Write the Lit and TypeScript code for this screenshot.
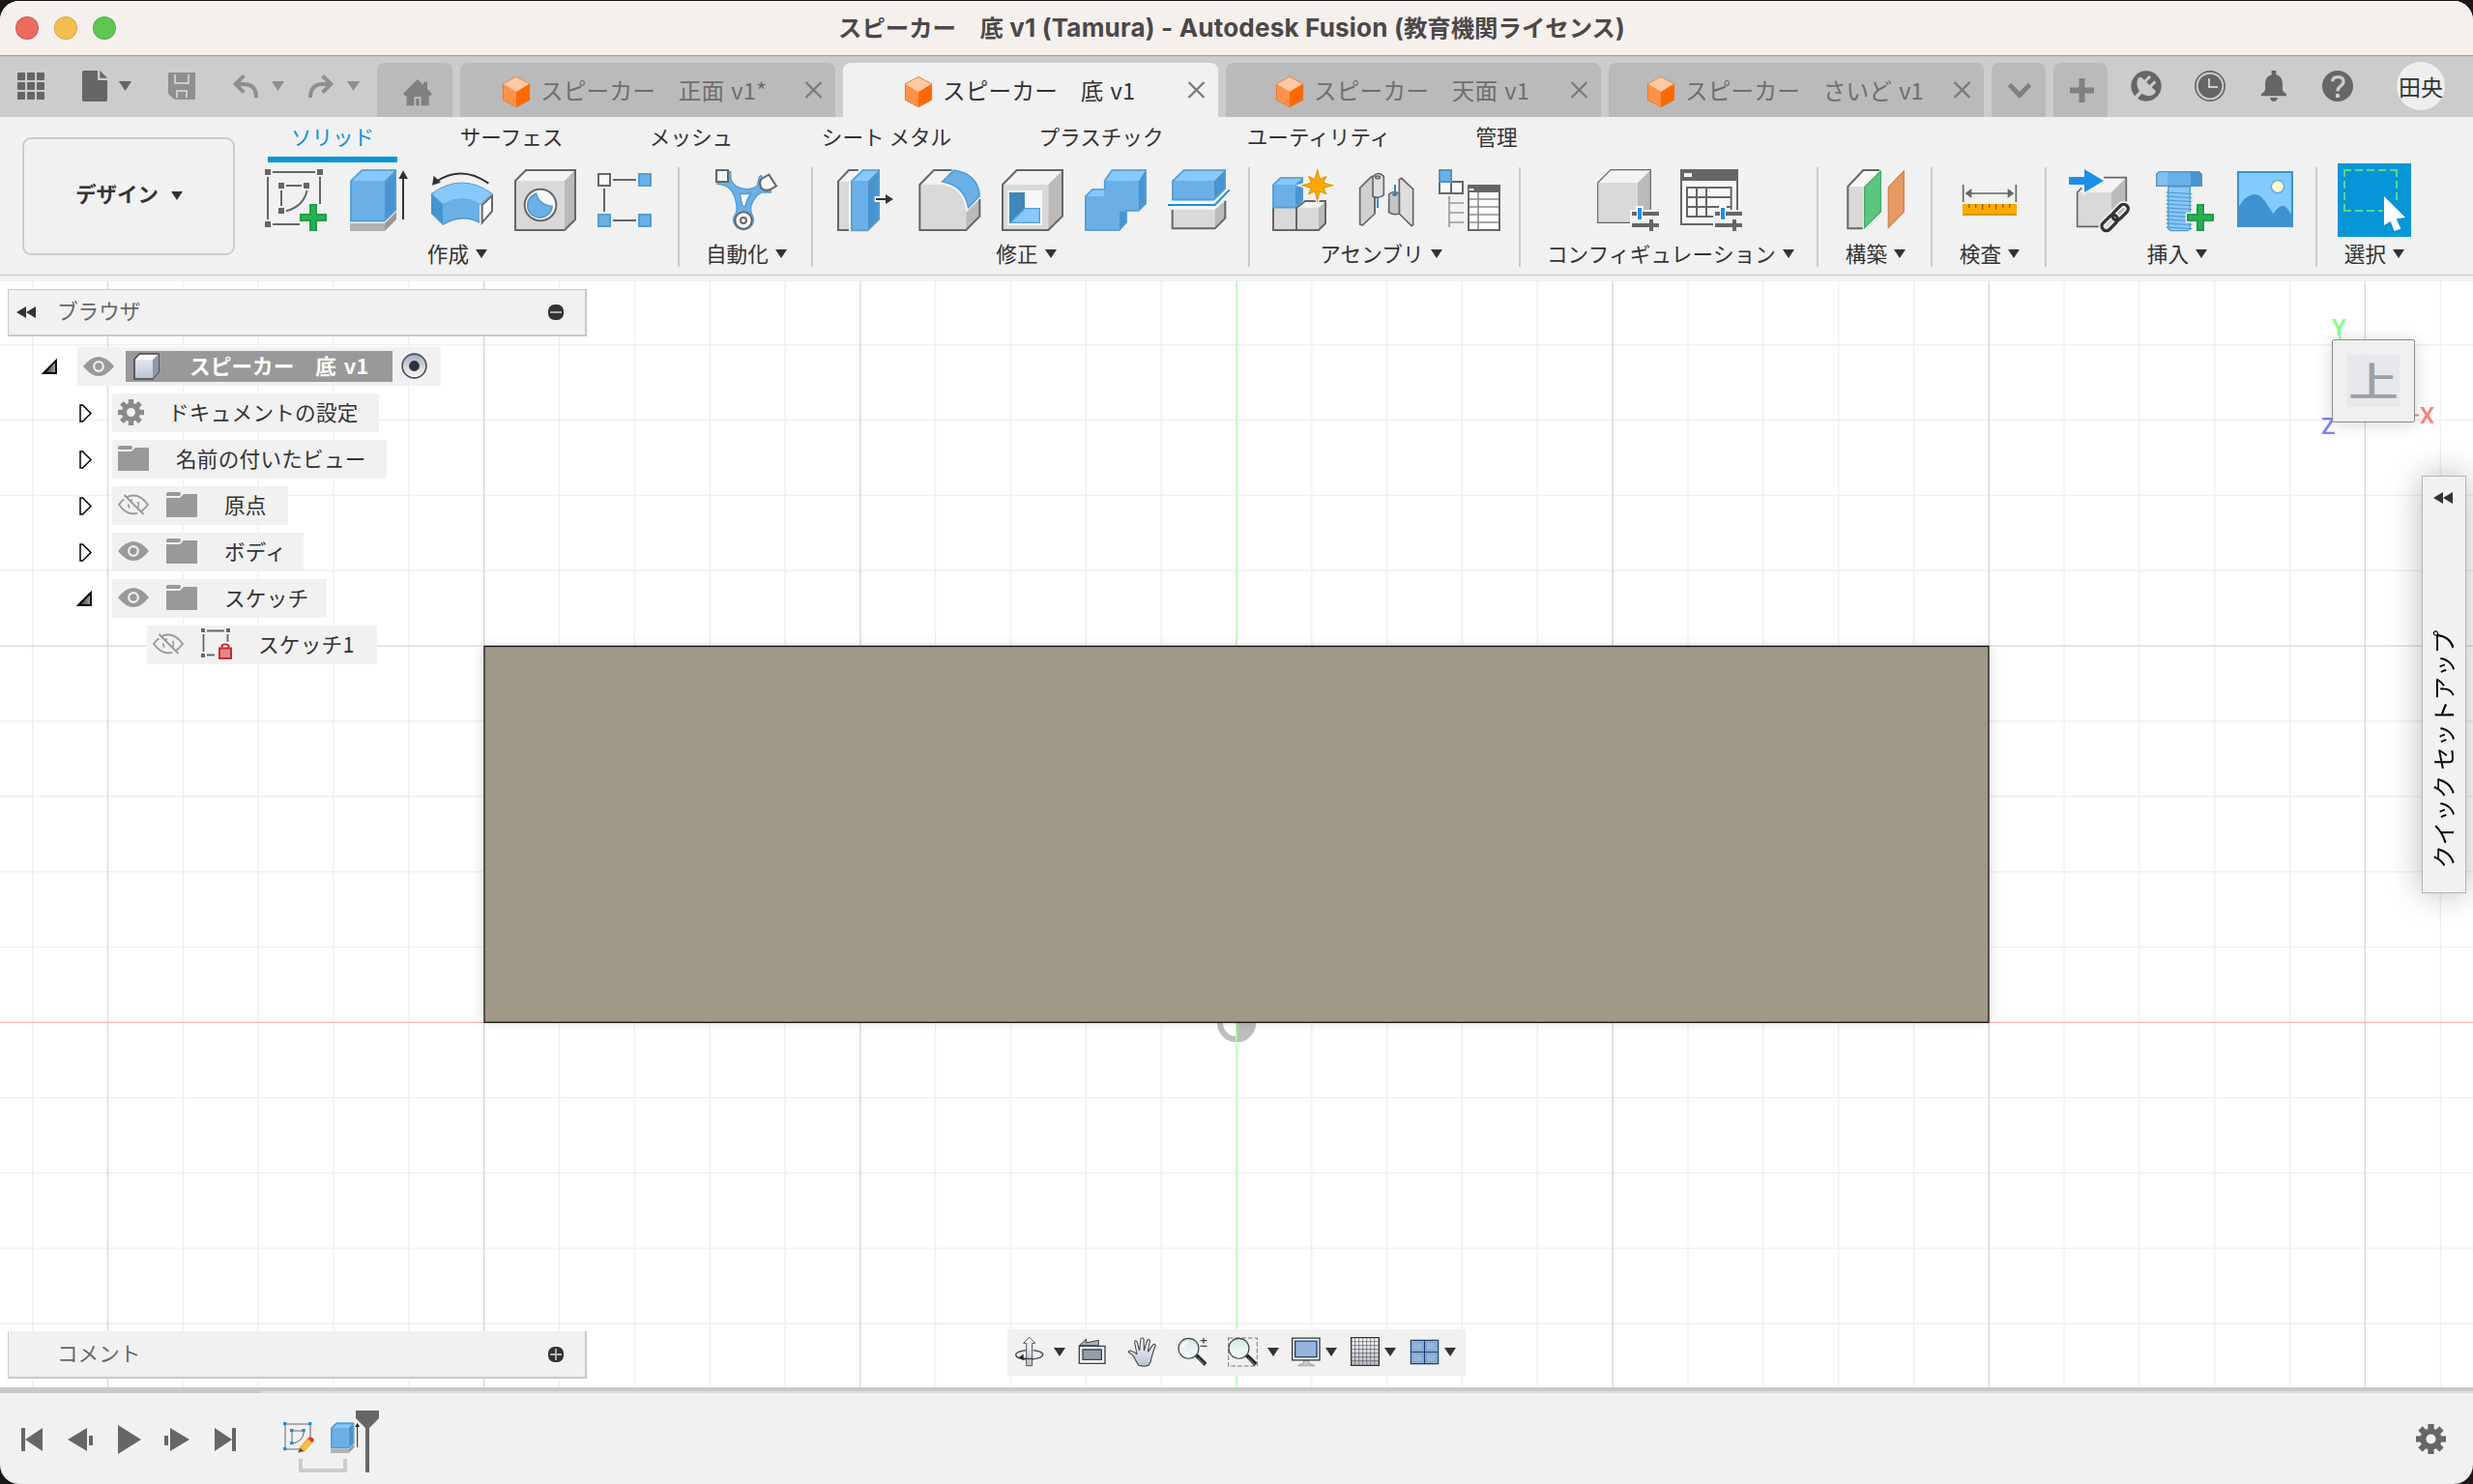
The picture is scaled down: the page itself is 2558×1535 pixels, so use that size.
import { LitElement, html, svg, css, nothing } from "lit";
import { customElement } from "lit/decorators.js";

/* ---------- palette ---------- */
const K = "#666666";
const BF = "#6aafe6", BT = "#87c8fd", BS = "#4794d0", BL = "#559dd1";
const GF = "#d9d9d9", GT = "#f3f3f3", GS = "#bababa";

/* ---------- helpers ---------- */
const icon = (w: number, h: number, vw: number, vh: number, body: unknown) =>
  html`<svg class="ic" width=${w} height=${h} viewBox="0 0 ${vw} ${vh}" fill="none">${body}</svg>`;
const tool = (body: unknown) => icon(64, 64, 192, 192, body);
const tri = (w = 12, h = 9, c = "#333") =>
  icon(w, h, 12, 9, svg`<path d="M0 0H12L6 9Z" fill=${c}/>`);

const plus = svg`<path d="M138 108h24v30h30v24h-30v30h-24v-30h-30v-24h30z" fill="#f1f1f1" stroke="#f1f1f1" stroke-width="8"/>
  <path d="M141 111h18v30h30v18h-30v30h-18v-30h-30v-18h30z" fill="#28b151" stroke="#1e9e48" stroke-width="6"/>`;

const sliders = svg`
  <path d="M102 126h18v-12h24v12h48v60h-12v10h-24v-10h-54z" fill="#f1f1f1"/>
  <path d="M108 138H192M108 174H192" stroke=${K} stroke-width="12"/>
  <path d="M168 156V192" stroke=${K} stroke-width="12"/>
  <path d="M132 117V159" stroke="#fff" stroke-width="18"/>
  <path d="M132 120V156" stroke="#1b8fe6" stroke-width="12"/>`;

const cube = (fx: number, fy: number, fw: number, fh: number, d: number, blue = true) => {
  const [f, t, s] = blue ? [BF, BT, BS] : [GF, GT, GS];
  return svg`<path d="M${fx} ${fy}h${fw}v${fh}h${-fw}z" fill=${f}/>
    <path d="M${fx} ${fy}l${d} ${-d}h${fw}l${-d} ${d}z" fill=${t}/>
    <path d="M${fx + fw} ${fy}l${d} ${-d}v${fh}l${-d} ${d}z" fill=${s}/>
    ${blue ? svg`<path d="M${fx + 3} ${fy + 1}l${d - 1} ${-d + 2}h${fw - 5}v${fh - 2}l${-d + 1} ${d - 2}h${-fw + 5}z" stroke=${BL} stroke-width="5"/>` : nothing}`;
};

const starPts = (cx: number, cy: number, R: number, r: number) =>
  Array.from({ length: 16 }, (_, i) => {
    const a = (i * Math.PI) / 8, q = i % 2 ? r : i % 4 ? R * 0.8 : R;
    return `${(cx + q * Math.sin(a)).toFixed(1)},${(cy - q * Math.cos(a)).toFixed(1)}`;
  }).join(" ");

/* ---------- ribbon icons ---------- */
const icSketch = tool(svg`
  <path d="M0 0h18v18h-18zM162 0h18v18h-18zM0 162h18v18h-18zM42 42h18v18h-18zM120 42h18v18h-18zM42 120h18v18h-18z" fill=${K}/>
  <path d="M24 9H156M9 24V156M171 24V108M24 171H108M66 51H114M51 66V114M131 66Q119 116 66 130" stroke=${K} stroke-width="6"/>${plus}`);
const icExtrude = tool(svg`
  ${cube(6, 36, 108, 126, 36)}
  <path d="M6 168H114V192H6Z" fill="#b2b2b2"/><path d="M114 168L150 132V156L114 192Z" fill="#999"/>
  <path d="M171 24V156" stroke="#333" stroke-width="6"/><path d="M171 4L157 30H186Z" fill="#333"/>`);
const icRevolve = tool(svg`
  <path d="M178 44Q96 -14 16 38" stroke="#333" stroke-width="6"/><path d="M3 50L8 20L30 41Z" fill="#333"/>
  <path d="M0 77L36 110V173L0 138Z" fill=${BS}/>
  <path d="M0 77Q94 8 188 75L152 110Q94 74 36 110Z" fill=${BT} stroke=${BL} stroke-width="3"/>
  <path d="M36 110Q94 74 150 110V167Q94 138 36 173Z" fill=${BF}/>
  <path d="M36 172Q94 136 150 165" stroke=${BL} stroke-width="5"/>
  <path d="M0 77L36 110" stroke=${BL} stroke-width="4"/>
  <path d="M158 111L189 82V130L158 166Z" fill="#fff" stroke=${K} stroke-width="6"/>`);
const icHole = tool(svg`
  ${cube(3, 36, 153, 153, 33, false)}
  <path d="M3 36L36 3H189V156L156 189H3Z" stroke=${K} stroke-width="6"/>
  <circle cx="81" cy="111" r="49" fill="#f8f8f8" stroke=${K} stroke-width="6"/>
  <path d="M68 76A38 38 0 1 0 117 115A50 50 0 0 1 68 76Z" fill=${BF} stroke=${BL} stroke-width="5"/>`);
const icPattern = tool(svg`
  <path d="M3 15h36v36h-36z" fill="#f8f8f8" stroke=${K} stroke-width="6"/>
  <path d="M129 15h36v36h-36zM3 141h36v36h-36zM129 141h36v36h-36z" fill=${BF} stroke=${BL} stroke-width="6"/>
  <path d="M48 33H120M21 60V132M48 159H120" stroke=${K} stroke-width="6"/>`);
const icAutomate = tool(svg`
  <path d="M40 8L47 8L48 32Q62 61 96 62Q120 62 130 50L136 24L142 20L172 64L172 72L144 72Q120 84 110 116Q108 134 116 146A31 31 0 1 1 58 146Q68 134 66 116Q62 78 46 62Q30 47 6 46V38H40Z" fill=${BF} stroke=${BL} stroke-width="4"/>
  <path d="M76 75Q92 78 110 75Q98 92 92 115Q86 118 83 112Z" fill="#f8f8f8" stroke=${BL} stroke-width="4"/>
  <path d="M3 3h36v36h-36z" fill="#f8f8f8" stroke=${K} stroke-width="6"/>
  <path d="M166 17L189 52L170 63Q150 70 141 56Q133 36 148 27Z" fill="#f8f8f8" stroke=${K} stroke-width="6"/>
  <circle cx="87" cy="159" r="26" fill="#f8f8f8" stroke=${K} stroke-width="6"/>
  <circle cx="87" cy="159" r="9" stroke=${K} stroke-width="6"/>`);
const icPress = tool(svg`<g transform="translate(6 0)">
  <path d="M2 38H36V189H2Z" fill=${GF}/><path d="M2 38L36 3H70L36 38Z" fill=${GT}/>
  <path d="M66 3H36L3 38V189H36" stroke=${K} stroke-width="6"/>
  <path d="M36 34L72 -2V10L40 42V192H36Z" fill="#f8f8f8"/>
  ${cube(42, 36, 54, 155, 36)}
  <path d="M116 84H148V102H116Z" fill="#f8f8f8"/>
  <path d="M120 93H152" stroke="#333" stroke-width="6"/><path d="M150 78L174 93L150 108Z" fill="#333"/></g>`);
const icFillet = tool(svg`
  <path d="M4 48L48 3H108L72 44Z" fill=${GT}/>
  <path d="M4 48H66Q140 54 148 134V189H4Z" fill=${GF}/>
  <path d="M148 134L190 92V146L148 189Z" fill=${GS}/>
  <path d="M104 3H48L4 48V189H148L190 146V92" stroke=${K} stroke-width="6"/>
  <path d="M68 43L108 -2Q190 8 195 86L152 128Q144 52 68 43Z" fill="#f8f8f8"/>
  <path d="M74 39L110 3Q184 14 190 82L155 119Q142 50 74 39Z" fill=${BF} stroke=${BL} stroke-width="5"/>`);
const icShell = tool(svg`
  ${cube(3, 48, 142, 141, 44, false)}
  <path d="M3 48L47 3H189V146L145 189H3Z" stroke=${K} stroke-width="6"/>
  <path d="M18 66H126V174H18Z" fill="#f8f8f8"/>
  <path d="M24 72H72V122L24 168Z" fill="#4088bc"/>
  <path d="M72 122H118V166H27Z" fill=${BT} stroke=${BL} stroke-width="4"/>`);
const icCombine = tool(svg`
  <path d="M0 84H60V36H168V130H108V191H0Z" fill=${BF}/>
  <path d="M0 84L24 60H60V84ZM60 36L84 0H191L168 36Z" fill=${BT}/>
  <path d="M168 36L191 0V108L168 130ZM108 130H131V166L108 191Z" fill=${BS}/>
  <path d="M3 84L24 63H62V36L85 3H189V107L167 129H129V165L107 189H3Z" stroke=${BL} stroke-width="5"/>`);
const icSplit = tool(svg`
  ${cube(12, 36, 132, 60, 36)}
  <path d="M0 111H146L190 66" stroke="#f8f8f8" stroke-width="18"/>
  <path d="M0 111H146L191 64" stroke="#1b8fe6" stroke-width="6"/>
  <path d="M14 126H146V184H14Z" fill=${GF}/><path d="M146 126L178 98V152L146 184Z" fill=${GS}/>
  <path d="M14 126V184H146L178 152V98" stroke=${K} stroke-width="6"/>`);
const icNewComp = tool(svg`
  <path d="M3 120H75V189H3ZM78 120H144V189H78Z" fill=${GF}/>
  <path d="M78 120L99 99H165L144 120Z" fill=${GT}/><path d="M144 120L165 99V168L144 189Z" fill=${GS}/>
  <path d="M3 120V189H144L165 168V99H102L75 120V189" stroke=${K} stroke-width="6"/>
  ${cube(0, 48, 72, 72, 24)}
  <polygon points=${starPts(140, 50, 54, 24)} fill="#f8f8f8" stroke="#f8f8f8" stroke-width="8"/>
  <polygon points=${starPts(140, 50, 47, 20)} fill="#ffa900" stroke="#e79a05" stroke-width="4"/>`);
const icJoint = tool(svg`
  <path d="M14 58L50 23L60 22V138L22 174L14 171Z" fill="#d0d0d0" stroke=${K} stroke-width="5"/>
  <path d="M54 24V84Q70 94 88 80V22Q70 4 54 24Z" fill="#dedede" stroke=${K} stroke-width="5"/>
  <path d="M60 84V134" stroke=${K} stroke-width="5"/>
  <ellipse cx="69" cy="25" rx="7" ry="4" stroke=${K} stroke-width="5"/>
  <path d="M69 90V120" stroke="#1b8fe6" stroke-width="6"/>
  <path d="M136 32L143 28L179 62V172L174 176L136 138Z" fill="#dedede" stroke=${K} stroke-width="5"/>
  <path d="M104 78V134Q118 144 136 138V76Q118 64 104 78Z" fill="#c4c4c4" stroke=${K} stroke-width="5"/>
  <ellipse cx="122" cy="79" rx="8" ry="4" fill=${K}/><path d="M123 48V78" stroke="#1b8fe6" stroke-width="6"/>`);
const icBom = tool(svg`
  <path d="M3 39H75V75H3ZM39 39V75" fill="#f8f8f8" stroke=${K} stroke-width="6"/>
  <path d="M3 3h36v36h-36z" fill=${BF} stroke="#4f94c8" stroke-width="6"/>
  <path d="M33 84V180M33 105H78M33 135H78M33 165H78" stroke="#999" stroke-width="5"/>
  <path d="M93 51H189V189H93Z" fill="#fff" stroke=${K} stroke-width="6"/>
  <path d="M90 48H192V72H90Z" fill=${K}/><path d="M95 60h14v6h-14z" fill="#fff"/>
  <path d="M96 93H186M96 117H186M96 141H186M96 165H186M123 72V186" stroke="#8c8c8c" stroke-width="5"/>`);
const icConfig = tool(svg`
  ${cube(2, 42, 124, 124, 40, false)}
  <path d="M2 42L42 2H166V126L126 166H2Z" stroke=${K} stroke-width="3.5"/>${sliders}`);
const icConfigTable = tool(svg`
  <path d="M3 36H177V171H3Z" fill="#f8f8f8"/><path d="M0 0H180V36H0Z" fill=${K}/><path d="M12 12h24v12h-24z" fill="#f8f8f8"/>
  <path d="M3 36V171H102M177 36V126M21 57H158V147H21ZM21 87H158M21 117H158M51 57V147M81 57V147" stroke=${K} stroke-width="6"/>${sliders}`);
const icConstruct = tool(svg`
  <path d="M10 54H58V185H10Z" fill=${GF}/><path d="M10 54L58 3H110L58 54Z" fill="#f8f8f8"/>
  <path d="M108 3H58L10 54V184H56" stroke=${K} stroke-width="6"/>
  <path d="M62 56L112 6V132L62 181Z" fill="#5cc67f" stroke="#3fae68" stroke-width="4"/>
  <path d="M136 56L184 6V132L136 181Z" fill="#e89a63" stroke="#cf8752" stroke-width="4"/>`);
const icInspect = tool(svg`
  <path d="M14 48V102M178 48V102M26 75H166" stroke=${K} stroke-width="5"/>
  <path d="M20 75L40 60V90ZM172 75L152 60V90Z" fill=${K}/>
  <path d="M12 108H180V144H12Z" fill="#ffa900"/><path d="M12 141H180" stroke="#e09400" stroke-width="6"/>
  <path d="M32 108V120M53 108V120M74 108V126M95 108V120M116 108V126M137 108V120M158 108V120" stroke="#8a6414" stroke-width="4"/>`);
const icInsert = tool(svg`
  ${cube(26, 72, 106, 108, 46, false)}
  <path d="M40 58L26 72V178H94M108 26H178V108" stroke=${K} stroke-width="5"/>
  <path d="M-3 18H42V-10L116 36L42 82V54H-3Z" fill="#f3f3f3"/>
  <path d="M0 24H48V0L108 36L48 72V48H0Z" fill="#1b8fe6"/>
  <g transform="translate(143 150) rotate(-45)">
    <g stroke="#f1f1f1" stroke-width="20"><rect x="-52" y="-14" width="58" height="28" rx="14"/><rect x="-6" y="-14" width="58" height="28" rx="14"/></g>
    <g stroke="#333" stroke-width="10"><rect x="-52" y="-14" width="58" height="28" rx="14"/><rect x="-6" y="-14" width="58" height="28" rx="14"/></g>
  </g>`);
const icBolt = tool(svg`
  <path d="M50 54H118V186L110 191H58L50 186Z" fill=${BT} stroke=${BL} stroke-width="4"/>
  <path d="M44 72L124 77M44 84L124 89M44 96L124 101M44 108L124 113M44 120L124 125M44 132L124 137M44 144L124 149M44 156L124 161M44 168L124 173M44 180L124 185" stroke="#5b9fd4" stroke-width="4"/>
  <path d="M14 16L22 8H146L154 16V52H14Z" fill=${BF}/><path d="M14 16L22 8H48V52H14Z" fill="#83bfee"/><path d="M120 8H146L154 16V52H120Z" fill=${BS}/>
  <path d="M14 16L22 8H146L154 16V52H14Z" stroke="#5590b8" stroke-width="4"/>${plus}`);
const icPicture = tool(svg`
  <path d="M9 9H177V177H9Z" fill="#82cbff"/>
  <circle cx="132" cy="54" r="20" fill="#ffffcc" stroke="#66b0e4" stroke-width="5"/>
  <path d="M9 120Q34 78 60 78Q84 78 104 118L118 138L130 124Q146 104 160 120L177 144V177H9Z" fill="#3d92cf"/>
  <path d="M9 9H177V177H9Z" stroke="#3d92cf" stroke-width="6"/>`);
const icSelect = icon(76, 76, 228, 228, svg`
  <rect width="228" height="228" fill="#0696d7"/>
  <path d="M21 42V21H42M54 21H78M90 21H114M126 21H150M162 21H183V42M183 54V78M183 90V114M21 54V78M21 90V114M21 126V147H42M54 147H78M90 147H114M126 147H140" stroke="#5fd684" stroke-width="6"/>
  <path d="M144 102L210 168L182 172L196 203L176 210L164 180L144 192Z" fill="#fff"/>`);

/* ---------- header icons ---------- */
const icApps = icon(28, 28, 84, 84, svg`<g fill=${K}>${[0, 30, 60].map((y) => [0, 30, 60].map((x) => svg`<rect x=${x} y=${y} width="24" height="24" rx="2"/>`))}</g>`);
const icFile = icon(26, 32, 78, 96, svg`<path d="M5 0H48V30H78V91Q78 96 73 96H5Q0 96 0 91V5Q0 0 5 0Z" fill=${K}/><path d="M55 0L78 23H55Z" fill=${K}/>`);
const icSave = icon(28, 28, 84, 84, svg`<path d="M4 0H80Q84 0 84 4V80Q84 84 80 84H20L0 66V4Q0 0 4 0Z" fill="#8f8f8f"/><path d="M21 6V33H63V6M27 78V57H57V78" stroke="#ccc" stroke-width="6"/>`);
const icUndo = icon(26, 24, 78, 72, svg`<path d="M34 4L8 30L34 56M8 30H36Q72 32 72 72" stroke="#8f8f8f" stroke-width="12"/>`);
const icRedo = icon(26, 24, 78, 72, svg`<path d="M44 4L70 30L44 56M70 30H42Q6 32 6 72" stroke="#8f8f8f" stroke-width="12"/>`);
const icHome = icon(30, 28, 90, 84, svg`<path d="M0 44L45 0L63 18V8H75V30L90 46L84 52H80V82H56V54H34V82H11V52H6Z" fill="#808080"/><path d="M40 60H50V82H40Z" fill="#808080"/>`);
const icCube = icon(28, 32, 28, 32, svg`
  <path d="M14 0L28 7.5L14 16L0 7.5Z" fill="#ffc9a3"/><path d="M0 7.5L14 16V32L0 24.5Z" fill="#ff9248"/><path d="M28 7.5L14 16V32L28 24.5Z" fill="#ff6a00"/>
  <path d="M14 .4L27.6 7.7V24.3L14 31.6L.4 24.3V7.7Z" stroke="#d9772f" stroke-width=".8"/>`);
const icClose = icon(19, 18, 19, 18, svg`<path d="M1.5 1L17.5 17M17.5 1L1.5 17" stroke="#7b7b7b" stroke-width="2.4"/>`);
const icChevron = icon(24, 17, 24, 17, svg`<path d="M1.5 2.5L12 13.5L22.5 2.5" stroke="#808080" stroke-width="5"/>`);
const icAdd = icon(25, 25, 25, 25, svg`<path d="M12.5 0V25M0 12.5H25" stroke="#808080" stroke-width="6"/>`);
const icPlug = icon(32, 32, 96, 96, svg`
  <circle cx="48" cy="48" r="47" fill=${K}/>
  <path d="M20 30Q26 16 34 22L76 62Q80 68 68 76Q48 84 32 70Q16 54 20 30Z" fill="#ccc"/>
  <path d="M42 36L60 18M58 52L76 34" stroke="#ccc" stroke-width="9"/>
  <path d="M32 66L8 92" stroke="#ccc" stroke-width="11"/>`);
const icClock = icon(32, 32, 96, 96, svg`<circle cx="48" cy="48" r="45.5" stroke=${K} stroke-width="5"/><circle cx="48" cy="48" r="37" fill=${K}/><path d="M45 24V51H72" stroke="#ccc" stroke-width="6"/>`);
const icBell = icon(26, 32, 78, 96, svg`<path d="M32 0H46V13Q66 19 66 42V60Q68 68 78 73V79H0V73Q10 68 12 60V42Q12 19 32 13ZM27 84H51Q48 96 39 96Q30 96 27 84Z" fill=${K}/>`);
const icHelp = icon(32, 32, 96, 96, svg`<circle cx="48" cy="48" r="48" fill=${K}/><path d="M32 34Q32 20 48 20Q66 20 66 34Q66 42 56 49Q48 54 48 64" stroke="#ccc" stroke-width="10"/><path d="M42 72h12v12h-12z" fill="#ccc"/>`);

/* ---------- browser tree icons ---------- */
const G = "#999999";
const icEye = icon(32, 20, 32, 20, svg`<path d="M0 10Q8 0 16 0T32 10Q24 20 16 20T0 10Z" fill=${G}/><circle cx="16" cy="10" r="4.8" stroke="#f1f1f1" stroke-width="2.2"/>`);
const icEyeOff = icon(32, 22, 32, 22, svg`<g stroke=${G} stroke-width="1.8"><path d="M1 11Q8 1.5 16 1.5T31 11Q24 20.5 16 20.5T1 11Z"/><path d="M12 14.5A5.3 5.3 0 0 1 15 6M20.5 8A5.3 5.3 0 0 1 17 16.3M15 11.5A2 2 0 0 0 17 12.5"/></g><path d="M4.5 1.5L25 22.5" stroke="#f1f1f1" stroke-width="3"/><path d="M6.5 1L26.5 21" stroke=${G} stroke-width="2"/>`);
const icFolder = icon(32, 26, 32, 26, svg`<path d="M0 2Q0 0 2 0H13Q15 0 15 2L14 4H0Z" fill=${G}/><path d="M0 6H14L18 2H32V26H0Z" fill=${G}/>`);
const gear = (s: number, c: string, hole: string) => icon(s, s, 28, 28, svg`
  <g fill=${c}>${[0, 45, 90, 135].map((a) => svg`<rect x="11.2" y="0" width="5.6" height="28" transform="rotate(${a} 14 14)"/>`)}<circle cx="14" cy="14" r="10"/></g><circle cx="14" cy="14" r="4.6" fill=${hole}/>`);
const icBox = icon(28, 28, 28, 28, svg`
  <defs><linearGradient id="bx" x1="0" y1="0" x2="0" y2="1"><stop offset="0" stop-color="#eceff5"/><stop offset="1" stop-color="#bcc4d2"/></linearGradient></defs>
  <path d="M1 7L6 1H26V20L20 27H1Z" fill="url(#bx)" stroke="#444" stroke-width="1.6"/><path d="M20 7L26 1V20L20 27Z" fill="#8f97a6"/><path d="M2 7L6.5 2H25L20 7Z" fill="#fff"/>`);
const icRadio = icon(27, 27, 27, 27, svg`
  <defs><linearGradient id="rd" x1="0" y1="0" x2="0" y2="1"><stop offset="0" stop-color="#9fadc4"/><stop offset="1" stop-color="#fafbfd"/></linearGradient></defs>
  <circle cx="13.5" cy="13.5" r="12.4" fill="url(#rd)" stroke="#4d4d4d" stroke-width="1.6"/><circle cx="13.5" cy="13.5" r="5.4" fill="#333"/>`);
const icLockSketch = icon(32, 32, 32, 32, svg`
  <path d="M0 0h4v4h-4zM26 0h4v4h-4zM0 26h4v4h-4z" fill=${K}/><path d="M6 2.5H24M2.5 6V24M27.5 6V14M6 27.5H14" stroke=${K} stroke-width="1.8"/>
  <path d="M21.5 20V18.5Q21.5 16.5 25 16.5T28.5 18.5V20" stroke="#cf2a2a" stroke-width="2"/><path d="M19 20.5h12v10.5h-12z" fill="#e08a8a" stroke="#cf2a2a" stroke-width="2"/>`);
const icOpen = icon(15, 15, 15, 15, svg`<defs><linearGradient id="op"><stop offset="0" stop-color="#222"/><stop offset="1" stop-color="#aaa"/></linearGradient></defs><path d="M1 14L14 1V14Z" fill="url(#op)" stroke="#000" stroke-width="1.8"/>`);
const icClosed = icon(13, 19, 13, 19, svg`<path d="M1 1H3.5L12 9.5L3.5 18H1Z" fill="#fff" stroke="#000" stroke-width="1.5"/>`);
const icRewind = icon(20, 12, 20, 12, svg`<path d="M10 0V12L0 6ZM20 0V12L10 6Z" fill="#333"/>`);
const round = (v: boolean) => icon(16, 16, 16, 16, svg`<rect width="16" height="16" rx="6.5" fill="#333"/><path d=${v ? "M2 8H14M8 2V14" : "M2 8H14"} stroke="#b8b8b8" stroke-width="1.8"/>`);

/* ---------- navigation bar icons ---------- */
const N = "#3c4450";
const grads = svg`<defs>
  <linearGradient id="gl" x1="0" y1="0" x2="0" y2="1"><stop offset="0" stop-color="#d3e6e4"/><stop offset="1" stop-color="#fbfefe"/></linearGradient>
  <linearGradient id="mt" x1="0" y1="0" x2="0" y2="1"><stop offset="0" stop-color="#fff"/><stop offset="1" stop-color="#b9bfd2"/></linearGradient></defs>`;
const nOrbit = icon(30, 32, 90, 96, svg`${grads}
  <path d="M36 44Q2 48 2 58Q4 72 44 72Q86 70 86 56Q84 48 56 44" stroke=${N} stroke-width="4"/>
  <path d="M35 92V22H26L44 3L62 22H53V92Z" fill="url(#mt)" stroke="#555" stroke-width="3"/>
  <path d="M14 66Q30 72 54 70" stroke=${N} stroke-width="4"/><path d="M12 66L26 56V76Z" fill="#222"/>`);
const nLook = icon(30, 30, 90, 90, svg`${grads}
  <path d="M4 26L26 6L24 18L64 10V26Z" fill="#a9b2bb" stroke=${N} stroke-width="3"/>
  <path d="M4 28H84V82H4Z" fill="#f0f2f4" stroke=${N} stroke-width="4"/><path d="M15 39H73V70H15Z" fill="#93a0ab" stroke=${N} stroke-width="4"/>`);
const nPan = icon(30, 31, 90, 93, svg`${grads}
  <path d="M36 88Q26 74 20 60Q14 52 5 48Q2 42 10 42Q22 44 30 54L23 16Q24 8 30 14L38 42L42 6Q48 -2 51 6L52 42L62 10Q68 4 70 12L64 46L80 24Q88 18 87 27Q80 46 76 62Q74 78 66 88Q52 93 36 88Z" fill="url(#mt)" stroke=${N} stroke-width="3.2"/>`);
const nZoom = icon(31, 31, 92, 92, svg`${grads}
  <path d="M58 56L86 84" stroke="#222a33" stroke-width="12"/><path d="M62 64L82 83" stroke="#6b7683" stroke-width="3"/>
  <circle cx="34" cy="35" r="31" fill="url(#gl)" stroke=${N} stroke-width="3.5"/><path d="M16 32Q18 18 32 14" stroke="#fff" stroke-width="6"/>
  <path d="M80 2V20M70 11H90M70 28H90" stroke=${N} stroke-width="3.5"/>`);
const nFit = icon(31, 31, 92, 92, svg`${grads}
  <path d="M2 3H90V89H2Z" stroke="#777" stroke-width="3" stroke-dasharray="14 6"/>
  <path d="M58 56L86 84" stroke="#222" stroke-width="12"/><path d="M62 64L82 83" stroke="#777" stroke-width="3"/>
  <circle cx="34" cy="35" r="31" fill="url(#gl)" stroke="#444" stroke-width="3.5"/>`);
const nMonitor = icon(30, 31, 91, 93, svg`${grads}
  <path d="M38 72H54V82Q68 84 72 90H20Q24 84 38 82Z" fill="#c5cad8" stroke="#888" stroke-width="2"/>
  <path d="M2 3H88V72H2Z" fill="#f4f5f8" stroke="#333" stroke-width="4"/><path d="M11 12H79V62H11Z" fill="#96b5dc" stroke="#1f3a66" stroke-width="4"/>`);
const nGrid = icon(30, 30, 90, 90, svg`${grads}
  <path d="M2 2H88V88H2Z" fill="url(#mt)" stroke="#333" stroke-width="4"/>
  <path d=${[14, 26, 38, 50, 62, 74].map((v) => `M${v} 2V88M2 ${v}H88`).join("")} stroke="#555" stroke-width="2"/>`);
const nLayout = icon(31, 27, 92, 80, svg`
  <path d="M4 4H88V76H4Z" fill="#96b5dc" stroke="#1f3a66" stroke-width="3.5"/><path d="M46 4V76M4 40H88" stroke="#1f3a66" stroke-width="3.5"/>
  <path d="M10 10H40V34H10ZM52 10H82V34H52ZM10 46H40V70H10ZM52 46H82V70H52Z" stroke="#7d9dcb" stroke-width="3"/>`);

/* ---------- timeline icons ---------- */
const tPlay = (w: number, h: number, d: string) => icon(w, h, w, h, svg`<path d=${d} fill=${K}/>`);
const tSketch = icon(32, 32, 96, 96, svg`
  <path d="M8 6H84M6 8V84M84 8V60M8 84H56M30 27H62M27 30V62M64 30Q62 60 30 66" stroke=${K} stroke-width="3"/>
  <path d="M0 0h10v10h-10zM78 0h10v10h-10zM0 78h10v10h-10zM21 21h10v10h-10zM58 21h10v10h-10zM21 60h10v10h-10z" fill="#1b8fe6"/>
  <path d="M52 78L76 50L90 62L66 90L48 94Z" fill="#f9bb3e" stroke="#d0922a" stroke-width="2"/><path d="M46 94L52 80L64 90Z" fill="#555"/><path d="M76 50Q88 42 94 52Q98 58 90 64Z" fill="#ee3030"/>`);
const tExtrude = icon(32, 32, 96, 96, svg`
  ${cube(0, 18, 56, 63, 17)}<path d="M0 84H56V96H0Z" fill="#b2b2b2"/><path d="M56 84L73 67V79L56 96Z" fill="#999"/>
  <path d="M83 14V78" stroke="#222" stroke-width="3"/><path d="M83 2L76 15H90Z" fill="#222"/>`);

/* ---------- data ---------- */
const docTabs = [
  { t: "スピーカー　正面 v1*", pad: 44 },
  { t: "スピーカー　底 v1", pad: 64, active: true },
  { t: "スピーカー　天面 v1", pad: 52 },
  { t: "スピーカー　さいど v1", pad: 40 },
];
const ribbonTabs: [string, number][] = [
  ["ソリッド", 134], ["サーフェス", 236], ["メッシュ", 136], ["シート メタル", 268],
  ["プラスチック", 176], ["ユーティリティ", 274], ["管理", 94],
];
const groups = [
  { t: "作成", w: 449, p: 1, s: -10, i: [icSketch, icExtrude, icRevolve, icHole, icPattern] },
  { t: "自動化", w: 138, p: 2, s: 0, i: [icAutomate] },
  { t: "修正", w: 452, p: 4, s: -13, i: [icPress, icFillet, icShell, icCombine, icSplit] },
  { t: "アセンブリ", w: 280, p: 4, s: -11, i: [icNewComp, icJoint, icBom] },
  { t: "コンフィギュレーション", w: 308, p: 2, s: 2, i: [icConfig, icConfigTable] },
  { t: "構築", w: 118, p: 2, s: 0, i: [icConstruct] },
  { t: "検査", w: 118, p: 2, s: 0, i: [icInspect] },
  { t: "挿入", w: 280, p: 4, s: -12, i: [icInsert, icBolt, icPicture] },
  { t: "選択", w: 118, p: 0, s: 0, i: [icSelect] },
];
const tree = [
  { x: 116, w: 276, a: icClosed, i: [gear(27, "#8a8a8a", "#f1f1f1")], t: "ドキュメントの設定", m: 7 },
  { x: 116, w: 284, a: icClosed, i: [icFolder], t: "名前の付いたビュー", m: 10 },
  { x: 116, w: 182, a: icClosed, i: [icEyeOff, icFolder], t: "原点", m: 10 },
  { x: 116, w: 198, a: icClosed, i: [icEye, icFolder], t: "ボディ", m: 10 },
  { x: 116, w: 222, a: icOpen, i: [icEye, icFolder], t: "スケッチ", m: 10 },
  { x: 152, w: 238, a: nothing, i: [icEyeOff, icLockSketch], t: "スケッチ1", m: 9 },
];
const nav: [unknown, number][] = [
  [nOrbit, 8], [tri(), 10], [nLook, 13], [nPan, 21], [nZoom, 22], [nFit, 21], [tri(), 10],
  [nMonitor, 13], [tri(), 5], [nGrid, 14], [tri(), 5], [nLayout, 14], [tri(), 5],
];

@customElement("app-root")
export class AppRoot extends LitElement {
  static styles = css`
    :host { display: block; width: 2558px; height: 1535px; background: #1b1617; overflow: hidden;
      font-family: "Noto Sans CJK JP", "Noto Sans", sans-serif; color: #333; font-size: 21.6px; }
    * { box-sizing: border-box; }
    svg { display: block; flex: none; overflow: visible; }
    .window { display: flex; flex-direction: column; width: 2558px; height: 1534px;
      transform: translateY(1px); border-radius: 20px; overflow: hidden; background: #f1f1f1; white-space: nowrap; }
    .title { height: 57px; flex: none; display: grid; grid-template-columns: 1fr; align-items: center; background: #f6f0ed;
      border-bottom: 1px solid #a3a09f; border-top: 1px solid #fdf8f5; }
    .title > * { grid-area: 1 / 1; }
    .lights { display: flex; gap: 16px; padding-left: 16px; margin-top: -1px; }
    .light { width: 24px; height: 24px; border-radius: 50%; border: 1px solid rgba(0,0,0,.12); }
    .r { background: #ec6a5e; } .y { background: #f5bf4f; } .g { background: #61c554; }
    .caption { justify-self: center; padding-right: 10px; margin-top: -2px; font: 700 24.4px/30px "Noto Sans CJK JP", sans-serif; color: #4a4848; }
    .caption .lat { font-family: Inter, sans-serif; font-weight: 650; font-size: 26px; letter-spacing: .2px; }
    .tabs { height: 63px; flex: none; display: flex; align-items: flex-end; background: #ccc; border-top: 1px solid #c4c4c4; }
    .quick { width: 390px; height: 62px; display: flex; align-items: center; padding: 0 0 3px 18px; }
    .quick > .file { margin-left: 39px; } .quick > .a1 { margin-left: 11px; } .quick > .save { margin-left: 37px; }
    .quick > .undo { margin-left: 39px; } .quick > .a2 { margin-left: 13px; } .quick > .redo { margin-left: 24px; }
    .quick > .a3 { margin-left: 13px; }
    .tab { height: 56px; width: 388px; margin-right: 8px; background: #bababa; border-radius: 8px 8px 0 0; display: flex; align-items: center; color: #6e6e6e; font-size: 23.6px; }
    .tab.on { background: #f1f1f1; color: #333; }
    .tab .name { margin-left: 11px; line-height: 30px; letter-spacing: .2px; word-spacing: 1.5px; }
    .tab .x { margin-left: auto; padding-right: 13px; padding-bottom: 1px; }
    .tab > .ic { margin-top: 4px; }
    .home, .sm { justify-content: center; }
    .home { width: 78px; } .home > .ic { margin: 5px 0 0 5px; } .sm { width: 56px; } .sm > .ic { margin: 1px 0 0 2px; }
    .tools { display: flex; align-items: center; height: 62px; flex: 1; padding: 0 0 2px 16px; }
    .tools > div { display: flex; align-items: center; }
    .t34 { margin-left: 34px; } .t37 { margin-left: 37px; }
    .avatar { width: 50px; height: 50px; border-radius: 50%; background: #eee; justify-content: center; font-size: 23px; margin-left: 45px; color: #333; }
    .ribbon { height: 170px; flex: none; display: flex; position: relative; }
    .ribbon::after { content: ""; position: absolute; left: 0; right: 0; top: 163px; height: 1px; background: #c8c8c8; }
    .design { width: 220px; height: 122px; margin: 21px 0 0 23px; border: 2px solid #ccc; border-radius: 9px; display: flex; align-items: center; justify-content: center; gap: 13px; font-weight: 700; font-size: 21.4px; padding: 0 0 7px 1px; }
    .design .ic { margin-top: 6px; }
    .ribmain { display: flex; flex-direction: column; flex: 1; }
    .rtabs { display: flex; height: 47px; margin-left: 34px; }
    .rtab { display: flex; justify-content: center; height: 47px; line-height: 30px; padding-top: 5px; }
    .rtab.on { color: #0696d7; border-bottom: 6px solid #0696d7; }
    .groups { display: flex; margin: 0 0 0 11px; height: 108px; padding-top: 5px; }
    .group { height: 103px; border-right: 2px solid #ccc; display: flex; flex-direction: column; align-items: center; }
    .group:last-child { border-right: 0; }
    .icons { display: flex; gap: 22px; height: 64px; margin-top: 2px; align-items: center; justify-content: center; }
    .lab { display: flex; align-items: center; gap: 7px; line-height: 30px; margin-top: 8px; height: 30px; letter-spacing: .15px; }
    .lab .ic { margin-top: 1px; }
    .canvas { position: relative; height: 1144px; flex: none; background: #fff; overflow: hidden; }
    .canvas > svg.scene { position: absolute; left: 0; top: 0; }
    .panel { position: absolute; left: 8px; width: 599px; height: 49px; background: #f1f1f1; border: 1px solid #c9c9c9; border-right-width: 2px; border-bottom-width: 2px; display: flex; align-items: center; color: #666; }
    .panel .pt { margin-left: 22px; line-height: 30px; padding-bottom: 4px; }
    .panel .end { margin-left: auto; margin-right: 22px; }
    .browser { top: 8px; padding-left: 8px; }
    .comments { top: 1086px; border-top: 0; padding-left: 28px; }
    .tree { position: absolute; left: 0; top: 68px; display: flex; flex-direction: column; gap: 8px; }
    .row { display: flex; height: 40px; }
    .arr { display: flex; align-items: center; justify-content: flex-end; padding-right: 21px; }
    .chip { background: #f1f1f1; display: flex; align-items: center; padding: 0 0 2px 6px; gap: 18px; }
    .chip .nm { line-height: 30px; padding-bottom: 1px; letter-spacing: .25px; }
    .root { gap: 0; width: 376px; padding-bottom: 0; }
    .sel { margin-left: 12px; width: 276px; height: 32px; background: #999; display: flex; align-items: center; padding-left: 8px; color: #fff; font-weight: 700; gap: 30px; line-height: 30px; }
    .sel span { padding-bottom: 2px; letter-spacing: .1px; word-spacing: 3px; }
    .root .rad { margin-left: 9px; margin-top: -2px; }
    .vc { position: absolute; left: 2412px; top: 60px; width: 86px; height: 86px; border: 1.5px solid #8c8c8c; background: rgba(238,238,238,.88); box-shadow: 0 2px 18px rgba(0,0,0,.16); display: flex; align-items: center; justify-content: center; border-radius: 2px; }
    .face { width: 54px; height: 54px; background: #e7e8ec; display: flex; align-items: center; justify-content: center; font-size: 52px; line-height: 54px; color: #9da0a8; font-weight: 500; }
    .face span { display: block; transform: translateY(-1px) scaleY(.78); }
    .ax { position: absolute; font: 500 24px/24px Roboto, sans-serif; }
    .axy { left: 2412px; top: 36px; color: #80ff80; } .axx { left: 2503px; top: 127px; color: #ff7f7f; } .axz { left: 2401px; top: 138px; color: #7f7fff; }
    .quickset { position: absolute; left: 2505px; top: 201px; width: 46px; height: 432px; background: #f1f1f1; border: 1px solid #b4b4b4; box-shadow: 0 0 34px rgba(0,0,0,.28); display: flex; flex-direction: column; align-items: center; justify-content: space-between; padding: 16px 2px 25px 0; color: #000; }
    .vert { writing-mode: vertical-rl; text-orientation: sideways; transform: rotate(180deg); font-size: 24.1px; line-height: 30px; }
    .nav { position: absolute; left: 1042px; top: 1084px; width: 474px; height: 48px; background: #f1f1f1; display: flex; align-items: center; padding-bottom: 2px; }
    .strip { height: 6px; flex: none; background: #c9c9c9; display: flex; align-items: flex-end; }
    .strip i { margin-left: 270px; flex: 1; height: 2px; background: #ddd; }
    .timeline { height: 93px; flex: none; display: flex; padding: 0 28px 0 22px; align-items: flex-start; }
    .play { display: flex; align-items: center; height: 96px; }
    .m24 { margin-left: 24px; } .m26 { margin-left: 26px; }
    .feats { display: flex; flex-direction: column; margin: 30px 0 0 49px; }
    .fr { display: flex; gap: 17px; } .bracket { width: 50px; height: 14px; margin: 6px 0 0 16px; border: 4px solid #ccc; border-top: 0; }
    .marker { margin: 18px 0 0 -6px; } .set { margin: 32px 0 0 auto; }
  `;

  private scene() {
    const minor: string[] = [], major: string[] = [];
    for (let i = -16; i <= 16; i++) {
      if (i === 0) continue;
      const x = (1279 + i * 77.83).toFixed(1);
      (i % 5 ? minor : major).push(`M${x} 0V1144`);
    }
    for (let i = -4; i <= 9; i++) {
      if (i === 0) continue;
      const y = (766.5 - i * 77.87).toFixed(1);
      (i % 5 ? minor : major).push(`M0 ${y}H2558`);
    }
    return html`<svg class="scene" width="2558" height="1144" viewBox="0 0 2558 1144" fill="none">
      <defs><filter id="soft" x="-5%" y="-10%" width="110%" height="120%"><feGaussianBlur stdDeviation="7"/></filter></defs>
      <path d=${minor.join("")} stroke="#f0f0f0" stroke-width="1.4"/>
      <path d=${major.join("")} stroke="#d8d8d8" stroke-width="1.4"/>
      <path d="M0 766.5H2558" stroke="#ffacac" stroke-width="1.2"/>
      <circle cx="1279" cy="767" r="17" fill="#fff" stroke="#bebebe" stroke-width="6"/>
      <path d="M1279 767V787A20 20 0 0 0 1299 767Z" fill="#bebebe"/>
      <path d="M1279 0V1144" stroke="#c4fbc4" stroke-width="2"/>
      <path d="M1280 767V787" stroke="#9be09b" stroke-width="2"/>
      <rect x="500" y="379" width="1558" height="386" fill="#000" opacity=".16" filter="url(#soft)"/>
      <rect x="501" y="377.5" width="1556" height="389" fill="#a09988" stroke="#2a2822" stroke-width="1.4"/>
      <path d="M501 377.5H2057M501 766.5H2057" stroke="#111" stroke-width="1"/>
      <path d="M2420.5 56V60" stroke="#80ff80" stroke-width="2"/><path d="M2498 138.5H2502" stroke="#ff7f7f" stroke-width="2"/>
    </svg>`;
  }

  render() {
    return html`<div class="window">
      <div class="title">
        <div class="lights"><div class="light r"></div><div class="light y"></div><div class="light g"></div></div>
        <div class="caption">スピーカー　底<span class="lat"> v1 (Tamura) - Autodesk Fusion (</span>教育機関ライセンス<span class="lat">)</span></div>
      </div>
      <div class="tabs">
        <div class="quick">
          ${icApps}<div class="file">${icFile}</div><div class="a1">${tri(15, 10, K)}</div><div class="save">${icSave}</div>
          <div class="undo">${icUndo}</div><div class="a2">${tri(15, 10, "#8f8f8f")}</div>
          <div class="redo">${icRedo}</div><div class="a3">${tri(15, 10, "#8f8f8f")}</div>
        </div>
        <div class="tab home">${icHome}</div>
        ${docTabs.map((d) => html`<div class="tab ${d.active ? "on" : ""}" style="padding-left:${d.pad}px">${icCube}<div class="name">${d.t}</div><div class="x">${icClose}</div></div>`)}
        <div class="tab sm">${icChevron}</div><div class="tab sm">${icAdd}</div>
        <div class="tools">
          <div>${icPlug}</div><div class="t34">${icClock}</div><div class="t37">${icBell}</div><div class="t37">${icHelp}</div>
          <div class="avatar">田央</div>
        </div>
      </div>
      <div class="ribbon">
        <div class="design">デザイン ${tri()}</div>
        <div class="ribmain">
          <div class="rtabs">${ribbonTabs.map(([t, w], i) => html`<div class="rtab ${i ? "" : "on"}" style="width:${w}px">${t}</div>`)}</div>
          <div class="groups">${groups.map((g) => html`<div class="group" style="width:${g.w}px;padding-left:${g.p}px">
            <div class="icons">${g.i}</div>
            <div class="lab" style="margin-left:${g.s}px">${g.t}${tri()}</div></div>`)}</div>
        </div>
      </div>
      <div class="canvas">
        ${this.scene()}
        <div class="panel browser">${icRewind}<div class="pt">ブラウザ</div><div class="end">${round(false)}</div></div>
        <div class="tree">
          <div class="row"><div class="arr" style="width:80px">${icOpen}</div>
            <div class="chip root">${icEye}<div class="sel">${icBox}<span>スピーカー　底 v1</span></div><div class="rad">${icRadio}</div></div></div>
          ${tree.map((r) => html`<div class="row"><div class="arr" style="width:${r.x}px">${r.a}</div>
            <div class="chip" style="width:${r.w}px">${r.i}<div class="nm" style="margin-left:${r.m}px">${r.t}</div></div></div>`)}
        </div>
        <div class="ax axy">Y</div><div class="ax axx">X</div><div class="ax axz">Z</div>
        <div class="vc"><div class="face"><span>上</span></div></div>
        <div class="quickset">${icRewind}<div class="vert">クイック セットアップ</div></div>
        <div class="panel comments"><div class="pt">コメント</div><div class="end">${round(true)}</div></div>
        <div class="nav">${nav.map(([i, m]) => html`<div style="margin-left:${m}px">${i}</div>`)}</div>
      </div>
      <div class="strip"><i></i></div>
      <div class="timeline">
        <div class="play">
          ${tPlay(22, 24, "M0 0H4V24H0ZM22 0V24L4 12Z")}
          <div class="m26">${tPlay(26, 24, "M20 0V24L0 12ZM22 8H26V18H22Z")}</div>
          <div class="m26">${tPlay(24, 30, "M0 0L24 15L0 30Z")}</div>
          <div class="m24">${tPlay(26, 24, "M6 0V24L26 12ZM0 8H4V18H0Z")}</div>
          <div class="m26">${tPlay(22, 24, "M18 0H22V24H18ZM0 0V24L18 12Z")}</div>
        </div>
        <div class="feats"><div class="fr">${tSketch}${tExtrude}</div><div class="bracket"></div></div>
        <div class="marker">${icon(24, 64, 24, 64, svg`<path d="M0 0H24V8L14 18V64H10V18L0 8Z" fill=${K}/>`)}</div>
        <div class="set">${gear(31, K, "#f1f1f1")}</div>
      </div>
    </div>`;
  }
}
